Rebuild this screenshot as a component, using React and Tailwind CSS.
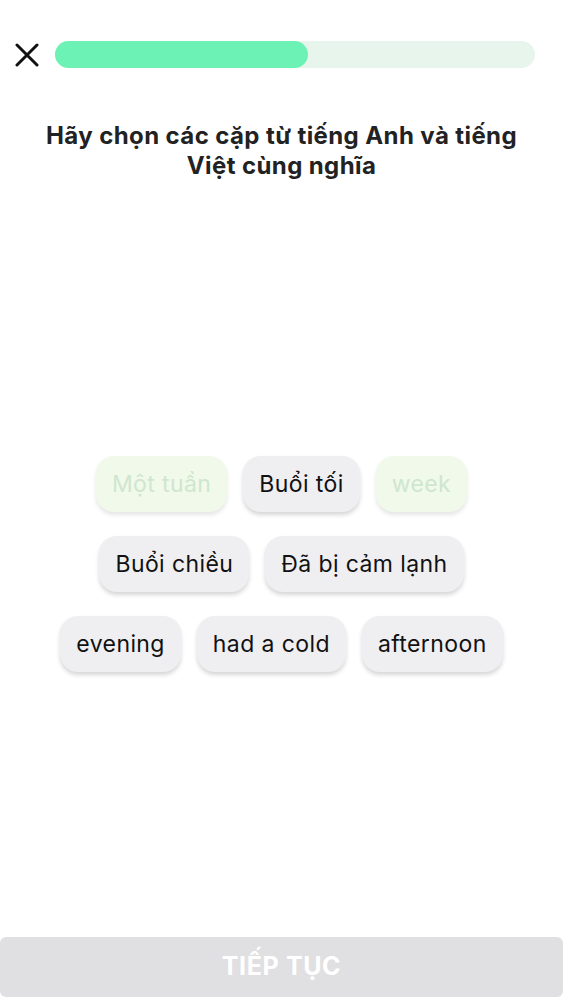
import React from "react";

const rows = [
  [
    { label: "Một tuần", done: true },
    { label: "Buổi tối" },
    { label: "week", done: true },
  ],
  [{ label: "Buổi chiều" }, { label: "Đã bị cảm lạnh" }],
  [{ label: "evening" }, { label: "had a cold" }, { label: "afternoon" }],
];

function Chip({ label, done }) {
  return (
    <button
      className={
        "h-[56px] px-[16px] rounded-[18px] text-[23px] tracking-[0.4px] leading-none " +
        (done
          ? "bg-[#f1f9ea] text-[#cfe6cf] shadow-[0_3px_4px_rgba(0,0,0,0.10)]"
          : "bg-[#efeef1] text-[#111111] shadow-[0_3px_4px_rgba(0,0,0,0.16)]")
      }
    >
      {label}
    </button>
  );
}

export default function App() {
  return (
    <div
      className="w-[563px] h-[1000px] bg-white flex flex-col"
      style={{ fontFamily: "Inter, 'Noto Sans', sans-serif" }}
    >
      {/* --- HEADER --- */}
      <div className="flex items-center pt-[41px] pl-[15px] pr-[28px] gap-[16px]">
        <svg width="24" height="24" viewBox="0 0 24 24" className="shrink-0">
          <path
            d="M2 2 L22 22 M22 2 L2 22"
            stroke="#111"
            strokeWidth="3"
            strokeLinecap="round"
          />
        </svg>
        <div className="flex-1 h-[27px] rounded-full bg-[#e8f5ec]">
          <div className="h-full w-[253px] rounded-full bg-[#6cf2b4]" />
        </div>
      </div>

      <h1 className="mt-[53px] px-[36px] text-center text-[24px] tracking-[0.4px] leading-[30px] font-bold text-[#222]">
        Hãy chọn các cặp từ tiếng Anh và tiếng Việt cùng nghĩa
      </h1>

      <div className="flex-1 flex flex-col items-center gap-[24px] pt-[275px]">
        {rows.map((row, i) => (
          <div key={i} className="flex gap-[16px] justify-center">
            {row.map((c) => (
              <Chip key={c.label} {...c} />
            ))}
          </div>
        ))}
      </div>

      <button className="h-[60px] mb-[3px] w-full rounded-[6px] bg-[#e0dfe2] text-white text-[25px] font-bold tracking-wide">
        TIẾP TỤC
      </button>
    </div>
  );
}
